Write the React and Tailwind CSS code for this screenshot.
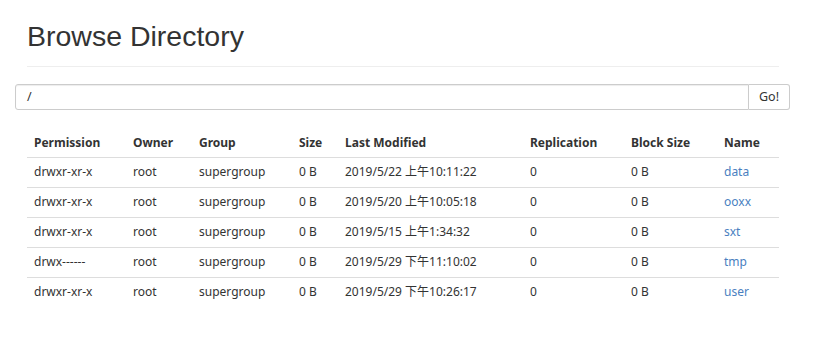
const rows = [
  ["drwxr-xr-x", "root", "supergroup", "0 B", "2019/5/22 上午10:11:22", "0", "0 B", "data"],
  ["drwxr-xr-x", "root", "supergroup", "0 B", "2019/5/20 上午10:05:18", "0", "0 B", "ooxx"],
  ["drwxr-xr-x", "root", "supergroup", "0 B", "2019/5/15 上午1:34:32", "0", "0 B", "sxt"],
  ["drwx------", "root", "supergroup", "0 B", "2019/5/29 下午11:10:02", "0", "0 B", "tmp"],
  ["drwxr-xr-x", "root", "supergroup", "0 B", "2019/5/29 下午10:26:17", "0", "0 B", "user"],
];

const headers = ["Permission", "Owner", "Group", "Size", "Last Modified", "Replication", "Block Size", "Name"];
const widths = ["w-[99px]", "w-[66px]", "w-[100px]", "w-[46px]", "w-[185px]", "w-[101px]", "w-[93px]", "w-[62px]"];

export default function App() {
  return (
    <div className="w-[817px] h-[340px] bg-white text-[#333] font-['Noto_Sans','Noto_Sans_CJK_SC',sans-serif]">
      <div className="pl-[27px] pr-[38px] pt-[18px]">
        <h1 className="font-['Liberation_Sans',sans-serif] text-[28.5px] leading-[36px] pb-[12px] border-b border-[#eee]">
          Browse Directory
        </h1>
      </div>
      <div className="flex ml-[15px] mr-[27px] mt-[17px] h-[26px] text-[12.5px]">
        <div className="flex-1 flex items-center border border-[#ccc] rounded-l-[3px] px-[11px] shadow-[inset_0_1px_1px_rgba(0,0,0,0.075)]">
          /
        </div>
        <button className="w-[41px] border border-[#ccc] border-l-0 rounded-r-[3px] bg-white">Go!</button>
      </div>
      <div className="ml-[27px] mr-[38px] mt-[17px]">
        <table className="w-full text-[12px] border-collapse">
          <thead>
            <tr className="h-[30px]">
              {headers.map((h, i) => (
                <th key={h} className={`${widths[i]} text-left font-bold px-[7px] pt-[2px] border-b border-[#ddd] align-middle`}>
                  {h}
                </th>
              ))}
            </tr>
          </thead>
          <tbody>
            {rows.map((r, ri) => (
              <tr key={ri} className="h-[30px]">
                {r.map((c, i) => (
                  <td
                    key={i}
                    className={`px-[7px] align-middle ${ri > 0 ? "border-t border-[#ddd]" : ""} ${i === 7 ? "text-[#4a7fbf]" : ""}`}
                  >
                    {c}
                  </td>
                ))}
              </tr>
            ))}
          </tbody>
        </table>
      </div>
    </div>
  );
}
